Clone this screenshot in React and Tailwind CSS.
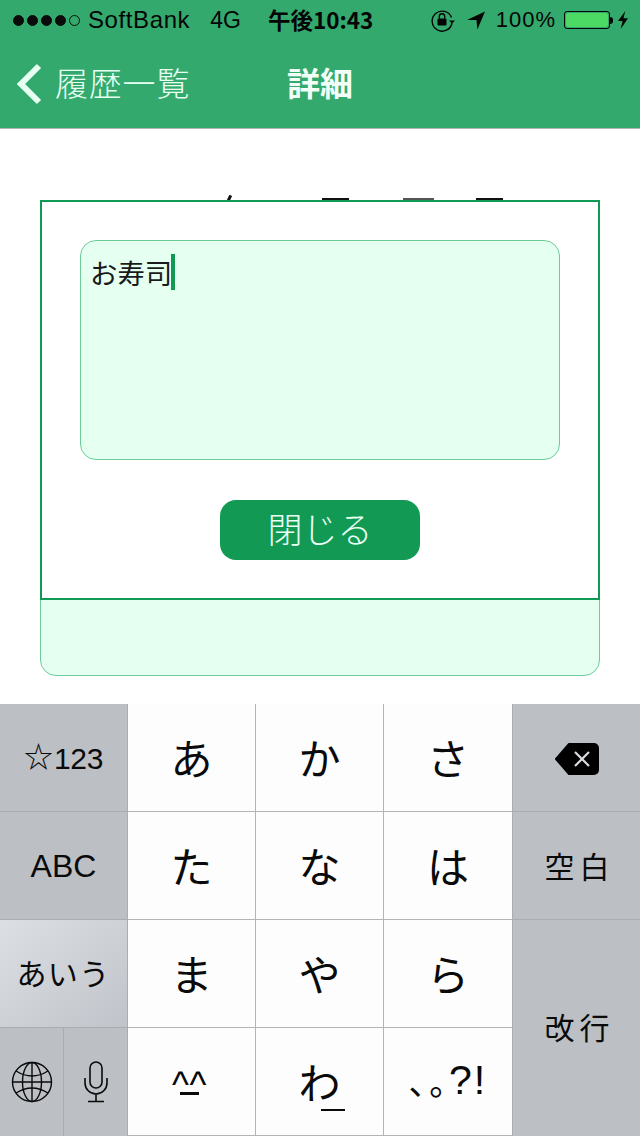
const jp = { fontFamily: '"Noto Sans CJK JP", "Liberation Sans", sans-serif' };
const latin = { fontFamily: '"Liberation Sans", sans-serif' };

function Dot({ filled }) {
  return <span className={`block h-[11px] w-[11px] rounded-full border border-[#0b0b0b] ${filled ? "bg-[#0b0b0b]" : ""}`} />;
}

function StatusBar() {
  return (
    <div className="relative flex h-10 items-center pl-[13px] pr-[12px] text-[#050505]" style={latin}>
      <div className="flex gap-[3px]">
        <Dot filled /><Dot filled /><Dot filled /><Dot filled /><Dot />
      </div>
      <span className="ml-[8px] text-[24px] leading-none tracking-[0.6px]">SoftBank</span>
      <span className="ml-[20px] text-[23px] leading-none">4G</span>
      <span className="ml-[27px] -translate-y-[1px] text-[22.5px] font-bold leading-none" style={jp}>午後10:43</span>
      <div className="ml-auto flex items-center">
        <svg width="24" height="24" viewBox="0 0 24 24" className="mr-[12px]">
          <path d="M20.5 9.5A10 10 0 1 0 21 15" fill="none" stroke="#050505" strokeWidth="1.4" />
          <path d="M18 12.5h6l-3 3z" fill="#050505" />
          <rect x="6.5" y="10.5" width="9" height="7" rx="1" fill="#050505" />
          <path d="M8.3 10.5V8.5a2.7 2.7 0 0 1 5.4 0v2" fill="none" stroke="#050505" strokeWidth="1.4" />
        </svg>
        <svg width="18" height="20" viewBox="0 0 19 20" className="mr-[11px]">
          <path d="M19 1 L0 10 L10 10 L11 20 Z" fill="#050505" />
        </svg>
        <span className="text-[22px] leading-none tracking-[1px]">100%</span>
        <div className="ml-[8px] h-[18px] w-[46px] rounded-[3px] border border-[#050505] p-[1px]">
          <div className="h-full w-full rounded-[2px] bg-[#4cd964]" />
        </div>
        <span className="h-[7px] w-[3px] rounded-r-sm bg-[#050505]" />
        <svg width="10" height="20" viewBox="0 0 11 20" className="ml-[5px]">
          <path d="M8 0 L0 11 L5 11 L3 20 L11 8 L6 8 Z" fill="#050505" />
        </svg>
      </div>
    </div>
  );
}

function NavBar() {
  return (
    <div className="relative flex h-[84px] items-center">
      <svg width="28" height="42" viewBox="0 0 28 42" className="ml-[15px] mt-[4px] shrink-0">
        <path d="M24 3 L6 21 L24 39" fill="none" stroke="#e6fff1" strokeWidth="6" />
      </svg>
      <span className="ml-[12px] text-[33px] font-light leading-none tracking-[0.8px] text-[#e6fff1]" style={jp}>履歴一覧</span>
      <span className="absolute left-[287px] text-[33px] font-bold leading-none text-[#f2fff8]" style={jp}>詳細</span>
    </div>
  );
}

function Key({ children, className = "" }) {
  return (
    <div className={`flex items-center justify-center border-r border-b border-[#b1b4b9] bg-[#fdfdfd] pb-[2px] text-[42px] leading-none text-[#0a0a0a] ${className}`} style={jp}>
      {children}
    </div>
  );
}

function SideKey({ children, className = "" }) {
  return (
    <div className={`flex items-center justify-center border-[#a9acb1] bg-[#bcbfc4] text-[30px] leading-none text-[#0a0a0a] ${className}`} style={jp}>
      {children}
    </div>
  );
}

function Keyboard() {
  return (
    <div className="grid h-[432px] grid-cols-[128px_128px_128px_128px_128px] grid-rows-[108px_108px_108px_108px]">
      <SideKey className="border-r border-b">
        <span className="-translate-y-[2px] pr-[1px] text-[29px]">☆</span>
        <span className="translate-y-[1px] tracking-[-0.3px]" style={latin}>123</span>
      </SideKey>
      <Key>あ</Key>
      <Key>か</Key>
      <Key className="border-r-0">さ</Key>
      <SideKey className="border-l border-b">
        <svg width="46" height="34" viewBox="0 0 46 34" className="translate-y-[1px]">
          <path d="M15 2 H40 a4 4 0 0 1 4 4 V28 a4 4 0 0 1 -4 4 H15 L2 17 Z" fill="#000" stroke="#000" strokeWidth="2" strokeLinejoin="round" />
          <path d="M21 10 L35 24 M35 10 L21 24" stroke="#d8dadd" strokeWidth="2.2" />
        </svg>
      </SideKey>

      <SideKey className="border-r border-b"><span className="text-[32px]" style={latin}>ABC</span></SideKey>
      <Key>た</Key>
      <Key>な</Key>
      <Key className="border-r-0">は</Key>
      <SideKey className="border-l border-b pb-[2px] pl-[6px]"><span className="tracking-[5px]">空白</span></SideKey>

      <SideKey className="border-r border-b bg-gradient-to-br from-[#dcdfe3] to-[#c0c3c9] pb-[3px]"><span className="tracking-[1.4px]">あいう</span></SideKey>
      <Key>ま</Key>
      <Key>や</Key>
      <Key className="border-r-0">ら</Key>
      <SideKey className="row-span-2 border-l pb-[5px] pl-[6px]"><span className="tracking-[5px]">改行</span></SideKey>

      <div className="flex">
        <SideKey className="w-[64px] border-r">
          <svg width="42" height="42" viewBox="0 0 42 42" fill="none" stroke="#0a0a0a" strokeWidth="1.4">
            <circle cx="21" cy="21" r="19.5" />
            <ellipse cx="21" cy="21" rx="9.5" ry="19.5" />
            <path d="M21 1.5V40.5M1.5 21H40.5" />
            <path d="M5 10Q21 20 37 10M5 32Q21 22 37 32" />
          </svg>
        </SideKey>
        <SideKey className="w-[64px] border-r">
          <svg width="24" height="42" viewBox="0 0 24 42" fill="none" stroke="#0a0a0a" strokeWidth="1.6">
            <rect x="6" y="1" width="12" height="26" rx="6" />
            <path d="M1 17V22a11 11 0 0 0 22 0V17M12 33V40M4 40.5H20" />
          </svg>
        </SideKey>
      </div>
      <Key>
        <span className="flex -translate-x-[2px] translate-y-[6px] flex-col items-center" style={latin}>
          <span className="text-[36px] leading-[14px] tracking-[0.5px]">^^</span>
          <span className="h-[3px] w-[19px] bg-[#0a0a0a]" />
        </span>
      </Key>
      <Key>
        <span className="relative">
          わ
          <span className="absolute left-[23px] top-[49px] h-[2px] w-[24px] bg-[#0a0a0a]" />
        </span>
      </Key>
      <Key className="border-r-0">
        <span className="flex items-center [font-feature-settings:'palt']">
          <span className="text-[34px] tracking-[3px]">、。</span>
          <span className="text-[41px] tracking-[2px]" style={latin}>?!</span>
        </span>
      </Key>
    </div>
  );
}

export default function App() {
  return (
    <div className="flex h-[1136px] w-[640px] flex-col overflow-hidden bg-white">
      <header className="h-[129px] shrink-0 border-b border-[#b3b3b3] bg-[#33a96d]">
        <StatusBar />
        <NavBar />
      </header>

      <main className="relative flex-1 px-10 pt-[71px]">
        <span className="absolute left-[228px] top-[66px] h-[6px] w-[3px] rotate-[25deg] bg-[#111]" />
        <span className="absolute left-[322px] top-[69px] h-[2px] w-[27px] bg-[#111]" />
        <span className="absolute left-[403px] top-[69px] h-[2px] w-[31px] bg-[#555]" />
        <span className="absolute left-[476px] top-[69px] h-[2px] w-[27px] bg-[#111]" />

        <div className="h-[476px] rounded-[16px] border border-[#6dcb9a] bg-[#e5fff0]" />

        <section className="absolute left-10 top-[71px] flex h-[400px] w-[560px] flex-col items-center border-2 border-[#129a55] bg-white px-[38px] pt-[38px]">
          <div className="relative h-[220px] w-[480px] rounded-[16px] border border-[#6dcb9a] bg-[#e5fff0] px-[9px] pt-[12px] text-[27.4px] leading-[38px] text-[#1a1a1a]" style={jp}>
            <span className="inline-flex h-[38px] items-center">
              お寿司
              <span className="ml-[-1px] h-[36px] w-[4px] bg-[#129a55]" />
            </span>
          </div>
          <button className="mt-10 h-[60px] w-[200px] rounded-[16px] bg-[#129a55] pb-[5px] text-[35px] font-light leading-none text-[#e9fff3]" style={jp}>
            閉じる
          </button>
        </section>
      </main>

      <Keyboard />
    </div>
  );
}
